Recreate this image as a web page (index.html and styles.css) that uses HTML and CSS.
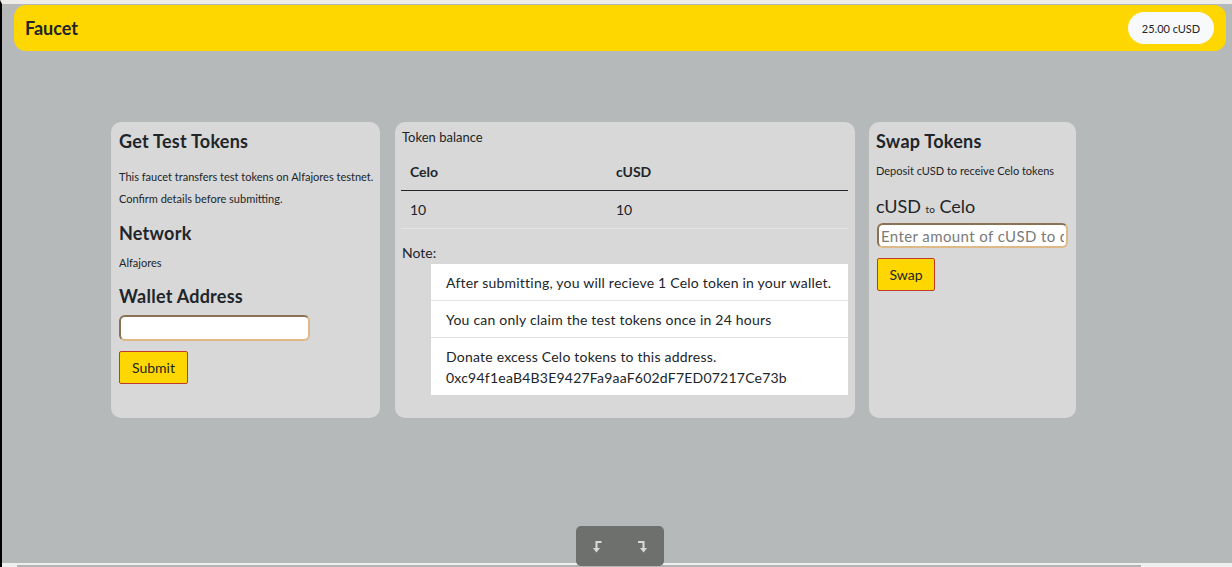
FILE: index.html
```html
<!DOCTYPE html>
<html lang="en">
<head>
<meta charset="utf-8">
<title>Faucet</title>
<link rel="stylesheet" href="styles.css">
</head>
<body>
<div class="frame">
  <header class="topbar">
    <span class="brand">Faucet</span>
    <span class="balance-pill">25.00 cUSD</span>
  </header>

  <main class="cards">
    <section class="card card-get">
      <h3 class="card-title">Get Test Tokens</h3>
      <p class="small-line first">This faucet transfers test tokens on Alfajores testnet.</p>
      <p class="small-line">Confirm details before submitting.</p>
      <h3 class="card-title network">Network</h3>
      <p class="small-line alfa">Alfajores</p>
      <h3 class="card-title wallet">Wallet Address</h3>
      <input class="text-input wallet-input" type="text">
      <button class="btn-yellow submit">Submit</button>
    </section>

    <section class="card card-balance">
      <div class="balance-label">Token balance</div>
      <table class="balance-table">
        <thead>
          <tr><th class="col-first">Celo</th><th>cUSD</th></tr>
        </thead>
        <tbody>
          <tr><td class="col-first">10</td><td>10</td></tr>
        </tbody>
      </table>
      <div class="note-label">Note:</div>
      <ul class="note-list">
        <li>After submitting, you will recieve 1 Celo token in your wallet.</li>
        <li>You can only claim the test tokens once in 24 hours</li>
        <li>Donate excess Celo tokens to this address.<br>0xc94f1eaB4B3E9427Fa9aaF602dF7ED07217Ce73b</li>
      </ul>
    </section>

    <section class="card card-swap">
      <h3 class="card-title">Swap Tokens</h3>
      <p class="small-line deposit">Deposit cUSD to receive Celo tokens</p>
      <h5 class="swap-heading">cUSD <small>to</small> Celo</h5>
      <input class="text-input swap-input" type="text" placeholder="Enter amount of cUSD to deposit">
      <button class="btn-yellow swap">Swap</button>
    </section>
  </main>
</div>

<div class="hscroll"><div class="hscroll-thumb"></div></div>

<div class="toolbar">
  <svg class="tool-icon" width="12" height="13" viewBox="0 0 12 13">
    <path d="M10.5 2 H5.5 V9" fill="none" stroke="#d9d9d9" stroke-width="2"/>
    <polygon points="2,8 9,8 5.5,12.5" fill="#d9d9d9"/>
  </svg>
  <svg class="tool-icon" width="12" height="13" viewBox="0 0 12 13">
    <path d="M1 2 H6.5 V9" fill="none" stroke="#d9d9d9" stroke-width="2"/>
    <polygon points="3,8 10,8 6.5,12.5" fill="#d9d9d9"/>
  </svg>
</div>
</body>
</html>
```

FILE: styles.css
```css
* { box-sizing: border-box; }

html, body {
  margin: 0;
  height: 100%;
  overflow: hidden;
}

body {
  background: #b6b9b9;
  font-family: Lato, "Noto Sans", "Liberation Sans", sans-serif;
  color: #212529;
}

.frame {
  min-height: 100vh;
  border-left: 2px solid #000;
  border-top: 4px solid #eeece9;
}

.topbar {
  margin: 1px 6px 0 12px;
  height: 46px;
  background: #ffd700;
  border-radius: 12px;
  display: flex;
  align-items: center;
  justify-content: space-between;
  padding: 0 12px 0 11px;
}

.brand {
  font-size: 18px;
  font-weight: 700;
  line-height: 1.2;
  margin-top: 2px;
}

.balance-pill {
  width: 86px;
  height: 32px;
  border-radius: 16px;
  background: #f8f9fa;
  display: flex;
  align-items: center;
  justify-content: center;
  font-size: 11px;
}

.cards {
  display: flex;
  gap: 14px;
  margin-top: 71px;
  padding-left: 109px;
}

.card {
  background: #d8d8d8;
  border-radius: 10px;
  height: 296px;
  padding: 9px 7px 8px;
}

.card-get { width: 269px; margin-right: 1px; padding-left: 8px; padding-right: 4px; }
.card-balance { width: 460px; padding-top: 8px; }
.card-swap { width: 207px; }

.card-title {
  margin: 0;
  font-size: 18px;
  font-weight: 700;
  line-height: 1.2;
  letter-spacing: 0.25px;
}

.small-line {
  margin: 0;
  font-size: 11px;
  line-height: 22px;
  white-space: nowrap;
}

.small-line.first { margin-top: 13px; }
.card-title.network { margin-top: 13px; }
.small-line.alfa { margin-top: 8px; }
.card-title.wallet { margin-top: 12px; }

.text-input {
  display: block;
  height: 26px;
  background: #fff;
  border: 2px inset #deb887;
  border-radius: 6px;
  font-family: inherit;
  font-size: 15px;
  padding: 0 2px;
  outline: none;
}

.text-input::placeholder { color: #7a7a7a; letter-spacing: 0.4px; }

.wallet-input {
  margin-top: 7px;
  width: 191px;
}

.btn-yellow {
  display: block;
  background: #ffd700;
  border: 1px solid #c0392b;
  border-radius: 2px;
  font-family: inherit;
  font-size: 14px;
  line-height: 21px;
  padding: 5px 11px;
  color: #212529;
}

.submit { margin-top: 10px; width: 69px; }

.balance-label {
  font-size: 13px;
  line-height: 1.2;
}

.balance-table {
  width: 447px;
  margin: 7px 0 0 -1px;
  border-collapse: collapse;
  font-size: 14px;
  line-height: 21px;
}

.balance-table th,
.balance-table td {
  text-align: left;
  padding: 8px 9px;
}

.balance-table th {
  font-weight: 700;
  border-bottom: 1px solid #212529;
}

.balance-table td {
  border-bottom: 1px solid #e4e4e4;
}

.col-first { width: 206px; }

.note-label {
  margin-top: 16px;
  font-size: 14px;
  line-height: 1.2;
}

.note-list {
  list-style: none;
  margin: 3px 0 0 29px;
  padding: 0;
  background: #fff;
  font-size: 14px;
  line-height: 21px;
  letter-spacing: 0.22px;
}

.note-list li {
  padding: 7.5px 15px;
  border-bottom: 1px solid #e2e2e2;
}

.note-list li:last-child { border-bottom: none; }

.deposit { margin-top: 7px; }

.swap-heading {
  margin: 14px 0 0 0;
  font-size: 18px;
  font-weight: 400;
  line-height: 1.2;
}

.swap-heading small { font-size: 10px; }

.swap-input {
  margin-top: 6px;
  width: 191px;
  height: 25px;
  margin-left: 1px;
}

.swap { margin-top: 10px; margin-left: 1px; width: 58px; padding: 5px 0; }

.hscroll {
  position: fixed;
  left: 2px;
  right: 0;
  bottom: 0;
  height: 4px;
  background: #efefef;
}

.hscroll-thumb {
  position: absolute;
  left: 15px;
  width: 1124px;
  bottom: 0;
  height: 2px;
  background: #b3b3b3;
}

.toolbar {
  position: fixed;
  left: 576px;
  bottom: 1px;
  width: 88px;
  height: 40px;
  background: #6e706e;
  border-radius: 5px;
  display: flex;
  align-items: center;
  justify-content: space-between;
  padding: 0 15px 0 15px;
}

.tool-icon { display: block; }
```
